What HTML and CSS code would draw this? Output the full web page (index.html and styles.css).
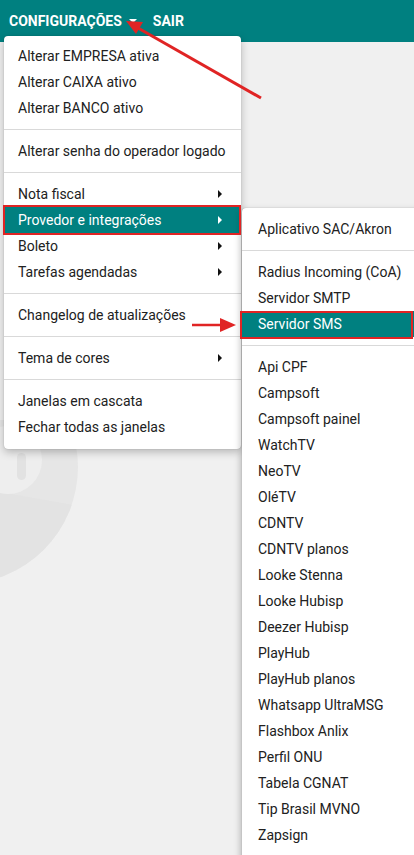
FILE: index.html
```html
<!DOCTYPE html>
<html lang="pt-BR">
<head>
<meta charset="utf-8">
<link rel="stylesheet" href="styles.css">
</head>
<body>
<header class="topbar">
  <span class="nav-item">CONFIGURAÇÕES <span class="caret"></span></span>
  <span class="nav-item">SAIR</span>
</header>

<svg class="watermark" width="120" height="170" viewBox="0 0 120 170">
  <circle cx="-39" cy="47" r="117" fill="#e6e6e6"/>
  <path d="M0 72 L80 86 L80 170 L0 170 Z" fill="#e3e3e3" clip-path="url(#wm)"/>
  <clipPath id="wm"><circle cx="-39" cy="47" r="117"/></clipPath>
  <circle cx="8" cy="40" r="34" fill="#eeeeee"/>
  <rect x="17" y="33" width="9" height="27" rx="4.5" fill="#e2e2e2"/>
</svg>

<div class="dropdown">
  <div class="item">Alterar EMPRESA ativa</div>
  <div class="item">Alterar CAIXA ativo</div>
  <div class="item">Alterar BANCO ativo</div>
  <div class="divider"></div>
  <div class="item">Alterar senha do operador logado</div>
  <div class="divider"></div>
  <div class="item sub">Nota fiscal</div>
  <div class="item sub active">Provedor e integrações</div>
  <div class="item sub">Boleto</div>
  <div class="item sub">Tarefas agendadas</div>
  <div class="divider"></div>
  <div class="item">Changelog de atualizações</div>
  <div class="divider"></div>
  <div class="item sub">Tema de cores</div>
  <div class="divider"></div>
  <div class="item">Janelas em cascata</div>
  <div class="item">Fechar todas as janelas</div>
</div>

<div class="submenu">
  <div class="item">Aplicativo SAC/Akron</div>
  <div class="divider"></div>
  <div class="item">Radius Incoming (CoA)</div>
  <div class="item">Servidor SMTP</div>
  <div class="item active">Servidor SMS</div>
  <div class="divider"></div>
  <div class="item">Api CPF</div>
  <div class="item">Campsoft</div>
  <div class="item">Campsoft painel</div>
  <div class="item">WatchTV</div>
  <div class="item">NeoTV</div>
  <div class="item">OléTV</div>
  <div class="item">CDNTV</div>
  <div class="item">CDNTV planos</div>
  <div class="item">Looke Stenna</div>
  <div class="item">Looke Hubisp</div>
  <div class="item">Deezer Hubisp</div>
  <div class="item">PlayHub</div>
  <div class="item">PlayHub planos</div>
  <div class="item">Whatsapp UltraMSG</div>
  <div class="item">Flashbox Anlix</div>
  <div class="item">Perfil ONU</div>
  <div class="item">Tabela CGNAT</div>
  <div class="item">Tip Brasil MVNO</div>
  <div class="item">Zapsign</div>
</div>

<div class="mark mark-provedor"></div>
<div class="mark mark-sms"></div>

<svg class="arrows" width="414" height="855" viewBox="0 0 414 855">
  <line x1="261" y1="98" x2="138" y2="28" stroke="#e02424" stroke-width="3"/>
  <polygon points="126,21 143,22 136,34" fill="#e02424"/>
  <line x1="192" y1="325" x2="222" y2="325" stroke="#e02424" stroke-width="2.5"/>
  <polygon points="236,325 220,318 220,332" fill="#e02424"/>
</svg>
</body>
</html>
```
FILE: styles.css
```css
html, body {
  margin: 0;
  padding: 0;
}
body {
  width: 414px;
  height: 855px;
  overflow: hidden;
  background: #f0f0f0;
  font-family: Roboto, "Liberation Sans", Arial, sans-serif;
  font-size: 14px;
  color: #212121;
  position: relative;
}
.topbar {
  height: 42px;
  background: #008080;
  display: flex;
  align-items: center;
  gap: 16px;
  padding-left: 9px;
  color: #fff;
  font-weight: 700;
  font-size: 14px;
}
.nav-item {
  display: flex;
  align-items: center;
  gap: 6px;
}
.caret {
  width: 0;
  height: 0;
  border-left: 4px solid transparent;
  border-right: 4px solid transparent;
  border-top: 4px solid #fff;
  margin-left: 1px;
}
.watermark {
  position: absolute;
  left: 0;
  top: 420px;
}
.dropdown {
  position: absolute;
  left: 4px;
  top: 36px;
  width: 237px;
  padding: 7px 0 9px;
  background: #fff;
  border-radius: 4px;
  box-shadow: 0 3px 8px rgba(0,0,0,0.25), 0 0 1px rgba(0,0,0,0.3);
}
.item {
  height: 26px;
  line-height: 26px;
  padding-left: 14px;
  white-space: nowrap;
  position: relative;
}
.item.active {
  background: #008080;
  color: #fff;
}
.item.sub::after {
  content: "";
  position: absolute;
  right: 19px;
  top: 9px;
  border-top: 4px solid transparent;
  border-bottom: 4px solid transparent;
  border-left: 4px solid #111;
}
.item.sub.active::after {
  border-left-color: #fff;
}
.divider {
  height: 1px;
  background: #d9d9d9;
  margin: 8px 0 8px;
}
.submenu {
  position: absolute;
  left: 242px;
  top: 208px;
  width: 190px;
  padding: 8px 0 20px;
  background: #fff;
  border-radius: 4px 0 0 0;
  box-shadow: -2px 2px 6px rgba(0,0,0,0.22), 0 0 1px rgba(0,0,0,0.35);
}
.submenu .item {
  padding-left: 16px;
}
.mark {
  position: absolute;
  border: 2px solid #e02424;
  box-sizing: border-box;
}
.mark-provedor {
  left: 3px;
  top: 205px;
  width: 238px;
  height: 30px;
}
.mark-sms {
  left: 240px;
  top: 311px;
  width: 173px;
  height: 28px;
}
.arrows {
  position: absolute;
  left: 0;
  top: 0;
  pointer-events: none;
}
```
